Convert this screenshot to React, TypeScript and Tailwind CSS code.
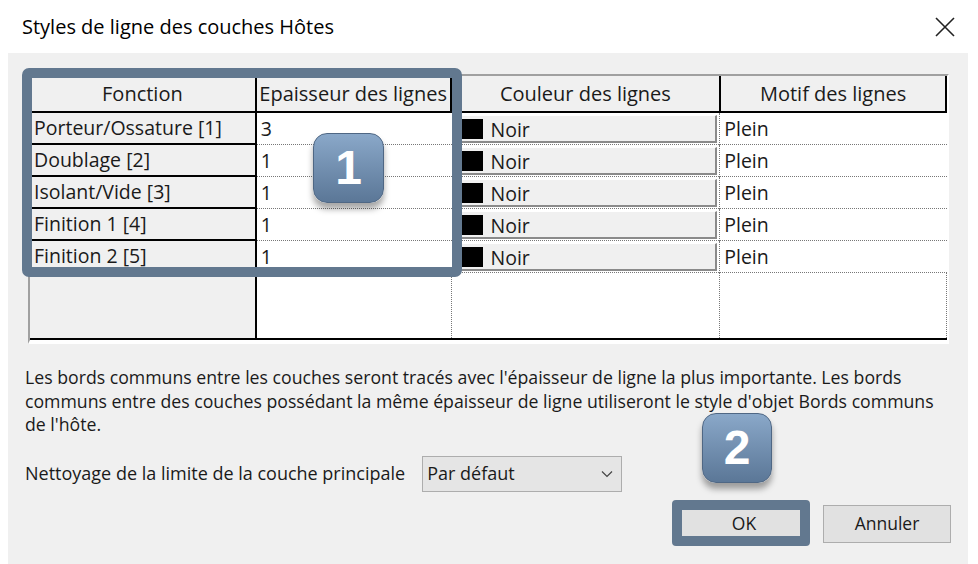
import React from 'react';

const rows = [
  { name: 'Porteur/Ossature [1]', width: '3' },
  { name: 'Doublage [2]', width: '1' },
  { name: 'Isolant/Vide [3]', width: '1' },
  { name: 'Finition 1 [4]', width: '1' },
  { name: 'Finition 2 [5]', width: '1' },
];

function Badge({ label, className }: { label: string; className: string }) {
  return (
    <div
      className={`absolute flex items-center justify-center rounded-[14px] bg-gradient-to-b from-[#8aa8c9] to-[#5b7797] border border-[#4f6784] text-white font-bold text-[48px] leading-none shadow-[0_6px_6px_rgba(0,0,0,0.35)] ${className}`}
      style={{ fontFamily: '"Liberation Sans", Arial, sans-serif' }}
    >
      {label}
    </div>
  );
}

export default function App() {
  return (
    <div
      className="relative w-[978px] h-[564px] bg-white overflow-hidden text-[#1a1a1a]"
      style={{ fontFamily: '"Open Sans", "Noto Sans", sans-serif' }}
    >
      {/* title bar */}
      <div className="h-[53px] flex items-center justify-between pl-[22px] pr-[22px]">
        <span className="text-[20px] text-black">Styles de ligne des couches Hôtes</span>
        <svg width="20" height="20" viewBox="0 0 20 20" className="mr-[1px]">
          <path d="M1 1 L19 19 M19 1 L1 19" stroke="#222" strokeWidth="1.6" />
        </svg>
      </div>

      {/* body */}
      <div className="ml-[8px] w-[960px] h-[511px] bg-[#f0f0f0] pt-[21px] pl-[20px]">
        {/* grid */}
        <div className="w-[921px] border-t-2 border-l-2 border-[#a0a0a0] border-b-4 border-b-white border-r-2 border-r-white">
          {/* header */}
          <div className="flex h-[37px] bg-[#f0f0f0] border-b-2 border-black text-[20px]">
            <div className="w-[227px] flex items-center justify-center border-r-2 border-black">Fonction</div>
            <div className="w-[195px] flex items-center justify-center border-r-2 border-black whitespace-nowrap overflow-hidden">Epaisseur des lignes</div>
            <div className="w-[268px] flex items-center justify-center">Couleur des lignes</div>
            <div className="w-[228px] flex items-center justify-center border-l-2 border-r-2 border-black">Motif des lignes</div>
          </div>
          {rows.map((r) => (
            <div key={r.name} className="flex h-[32px] text-[19.5px]">
              <div className="w-[227px] bg-[#f0f0f0] border-r-2 border-b-2 border-black pl-[4px] flex items-center whitespace-nowrap">
                {r.name}
              </div>
              <div className="w-[195px] bg-white border-b border-dotted border-[#777] pl-[4px] flex items-center">
                {r.width}
              </div>
              <div className="w-[268px] bg-white border-b border-dotted border-[#777] pl-[8px] pr-[2px] pt-[2px]">
                <div className="h-[28px] bg-[#f0f0f0] border-t border-l border-white border-b-2 border-r-2 border-b-[#8a8a8a] border-r-[#8a8a8a] flex items-center">
                  <div className="w-[21px] h-[20px] bg-black ml-[1px]" />
                  <span className="ml-[8px] pt-[3px]">Noir</span>
                </div>
              </div>
              <div className="w-[228px] bg-white border-l border-b border-dotted border-[#777] pl-[4px] flex items-center">
                Plein
              </div>
            </div>
          ))}
          {/* empty filler */}
          <div className="flex h-[67px] border-b-2 border-black">
            <div className="w-[227px] bg-[#f0f0f0] border-r-2 border-black" />
            <div className="w-[195px] bg-white border-r border-dotted border-[#777]" />
            <div className="w-[268px] bg-white" />
            <div className="w-[228px] bg-white border-l border-r border-dotted border-[#777]" />
          </div>
        </div>

        {/* note */}
        <p className="mt-[22px] -ml-[3px] text-[17.7px] leading-[23.5px] whitespace-nowrap">
          Les bords communs entre les couches seront tracés avec l'épaisseur de ligne la plus importante. Les bords
          <br />
          communs entre des couches possédant la même épaisseur de ligne utiliseront le style d'objet Bords communs
          <br />
          de l'hôte.
        </p>

        {/* dropdown */}
        <div className="mt-[19px] -ml-[3px] flex items-center gap-[17px] text-[18px]">
          <span>Nettoyage de la limite de la couche principale</span>
          <div className="w-[200px] h-[36px] bg-[#e5e5e5] border border-[#adadad] flex items-center justify-between pl-[4px] pr-[8px]">
            <span>Par défaut</span>
            <svg width="12" height="8" viewBox="0 0 12 8">
              <path d="M1 1.5 L6 6.5 L11 1.5" fill="none" stroke="#444" strokeWidth="1.2" />
            </svg>
          </div>
        </div>

        {/* buttons */}
        <div className="mt-[13px] flex justify-end gap-[15px] pr-[17px] text-[17.5px]">
          <div className="w-[128px] h-[38px] bg-[#e1e1e1] border border-[#adadad] flex items-center justify-center">OK</div>
          <div className="w-[128px] h-[38px] bg-[#e1e1e1] border border-[#adadad] flex items-center justify-center">Annuler</div>
        </div>
      </div>

      {/* highlight boxes */}
      <div className="absolute left-[22px] top-[68px] w-[440px] h-[209px] border-[10px] border-[#62788f] rounded-[7px]" />
      <div className="absolute left-[672px] top-[500px] w-[138px] h-[46px] border-[10px] border-[#62788f] rounded-[4px]" />

      <Badge label="1" className="left-[313px] top-[133px] w-[71px] h-[70px]" />
      <Badge label="2" className="left-[702px] top-[413px] w-[70px] h-[70px]" />
    </div>
  );
}
